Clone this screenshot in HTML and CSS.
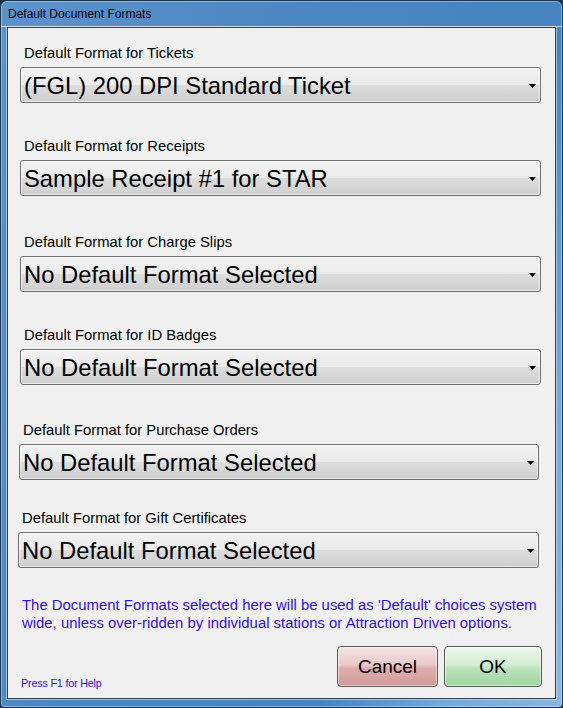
FILE: index.html
```html
<!DOCTYPE html>
<html>
<head>
<meta charset="utf-8">
<link rel="stylesheet" href="styles.css">
</head>
<body>
<div class="window">
  <div class="titlebar">Default Document Formats</div>
  <div class="client">
    <div class="field f1">
      <div class="label">Default Format for Tickets</div>
      <div class="select"><span class="value">(FGL) 200 DPI Standard Ticket</span><svg class="arrow" width="7" height="4" viewBox="0 0 7 4"><polygon points="0,0 7,0 3.5,4" fill="#000"/></svg></div>
    </div>
    <div class="field f2">
      <div class="label">Default Format for Receipts</div>
      <div class="select"><span class="value">Sample Receipt #1 for STAR</span><svg class="arrow" width="7" height="4" viewBox="0 0 7 4"><polygon points="0,0 7,0 3.5,4" fill="#000"/></svg></div>
    </div>
    <div class="field f3">
      <div class="label">Default Format for Charge Slips</div>
      <div class="select"><span class="value">No Default Format Selected</span><svg class="arrow" width="7" height="4" viewBox="0 0 7 4"><polygon points="0,0 7,0 3.5,4" fill="#000"/></svg></div>
    </div>
    <div class="field f4">
      <div class="label">Default Format for ID Badges</div>
      <div class="select"><span class="value">No Default Format Selected</span><svg class="arrow" width="7" height="4" viewBox="0 0 7 4"><polygon points="0,0 7,0 3.5,4" fill="#000"/></svg></div>
    </div>
    <div class="field f5">
      <div class="label">Default Format for Purchase Orders</div>
      <div class="select"><span class="value">No Default Format Selected</span><svg class="arrow" width="7" height="4" viewBox="0 0 7 4"><polygon points="0,0 7,0 3.5,4" fill="#000"/></svg></div>
    </div>
    <div class="field f6">
      <div class="label">Default Format for Gift Certificates</div>
      <div class="select"><span class="value">No Default Format Selected</span><svg class="arrow" width="7" height="4" viewBox="0 0 7 4"><polygon points="0,0 7,0 3.5,4" fill="#000"/></svg></div>
    </div>
    <p class="note">The Document Formats selected here will be used as 'Default' choices system wide, unless over-ridden by individual stations or Attraction Driven options.</p>
    <div class="footer">
      <div class="help">Press F1 for Help</div>
      <div class="buttons">
        <div class="btn cancel">Cancel</div>
        <div class="btn ok">OK</div>
      </div>
    </div>
  </div>
</div>
</body>
</html>
```
FILE: styles.css
```css
html, body {
  margin: 0;
  padding: 0;
  background: #1b3550;
}
.window {
  width: 563px;
  height: 708px;
  box-sizing: border-box;
  border: 1px solid #1c3550;
  border-radius: 7px 7px 4px 4px;
  background: linear-gradient(110deg, #5b93cb 0%, #4a86c2 40%, #4584c0 70%, #73a8d8 85%, #8ab7df 100%);
  display: flex;
  flex-direction: column;
  font-family: "Liberation Sans", Arial, sans-serif;
  box-shadow: inset 0 0 0 1px rgba(255,255,255,0.35);
}
.titlebar {
  height: 25px;
  line-height: 27px;
  padding-left: 7px;
  font-size: 12px;
  color: #000;
  border-bottom: 1px solid rgba(220,235,250,0.8);
}
.client {
  flex: 1;
  margin: 0 6px 8px 6px;
  background: #f0f0f0;
  border: 1px solid #2d4257;
  box-shadow: 0 0 0 1px rgba(210,230,250,0.6);
  display: flex;
  flex-direction: column;
  padding: 14px 0 0 0;
}
.field {
  margin-left: 12px;
  width: 521px;
}
.f2 { margin-top: 32px; }
.f3 { margin-top: 35px; }
.f4 { margin-top: 32px; }
.f5 { margin-top: 34px; margin-left: 11px; width: 520px; }
.f6 { margin-top: 27px; margin-left: 10px; width: 521px; }
.label {
  height: 20px;
  line-height: 22px;
  font-size: 14.8px;
  padding-left: 4px;
  color: #000;
  margin-bottom: 5px;
}
.select {
  height: 36px;
  box-sizing: border-box;
  border: 1px solid #707070;
  border-radius: 3px;
  background: linear-gradient(to bottom, #f2f2f2 0%, #ebebeb 50%, #dddddd 50%, #cfcfcf 100%);
  box-shadow: inset 0 0 0 1px rgba(255,255,255,0.6);
  display: flex;
  align-items: center;
  justify-content: space-between;
  padding: 0 4px 0 3px;
}
.value {
  font-size: 23.8px;
  line-height: 34px;
  padding-top: 2px;
  color: #000;
  white-space: nowrap;
}
.arrow {
  display: block;
  margin-top: 1px;
}
.note {
  margin: 28px 0 0 14px;
  font-size: 14.9px;
  line-height: 18px;
  color: #3310d8;
  width: 535px;
}
.footer {
  display: flex;
  justify-content: space-between;
  align-items: flex-end;
  margin-top: 14px;
  padding: 0 13px 0 13px;
}
.help {
  font-size: 10.8px;
  color: #2a17d8;
  margin-bottom: -2px;
  letter-spacing: -0.2px;
}
.buttons {
  display: flex;
  gap: 6px;
}
.btn {
  height: 41px;
  box-sizing: border-box;
  border: 1px solid #5a5a5a;
  border-radius: 4px;
  display: flex;
  align-items: center;
  justify-content: center;
  font-size: 19px;
  color: #000;
  box-shadow: inset 0 0 0 1px rgba(255,255,255,0.5);
}
.cancel {
  width: 101px;
  background: linear-gradient(to bottom, #f3e4e4 0%, #ebcaca 45%, #dfadad 55%, #d39a9a 100%);
}
.ok {
  width: 98px;
  background: linear-gradient(to bottom, #eef7ee 0%, #d3eed3 45%, #bde3bd 55%, #9fd69f 100%);
}
```
